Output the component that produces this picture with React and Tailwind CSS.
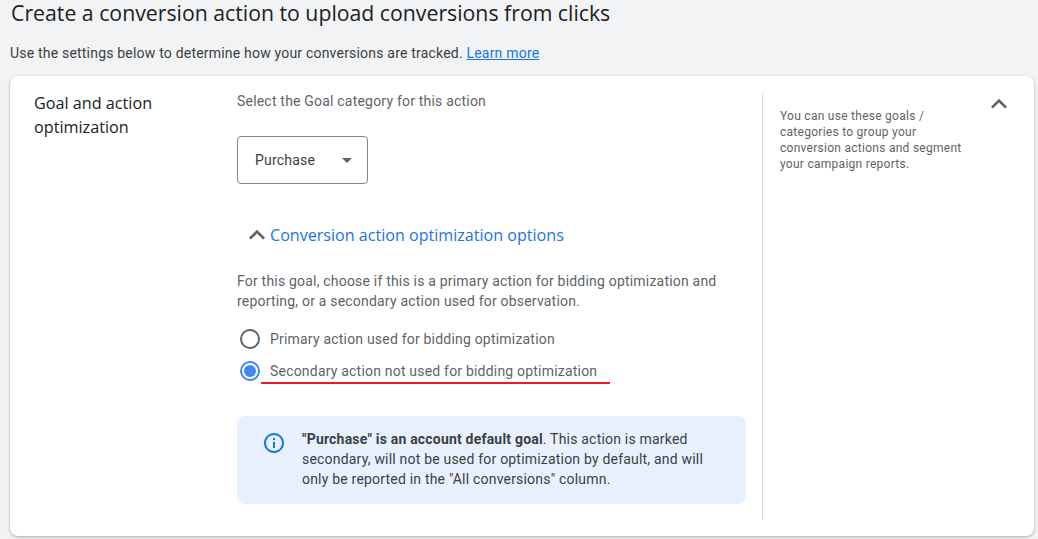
import React from 'react';

const CHEVRON_UP = 'M7.41 15.41L12 10.83l4.59 4.58L18 14l-6-6-6 6z';
const INFO_OUTLINE =
  'M11 7h2v2h-2zm0 4h2v6h-2zm1-9C6.48 2 2 6.48 2 12s4.48 10 10 10 10-4.48 10-10S17.52 2 12 2zm0 18c-4.41 0-8-3.59-8-8s3.59-8 8-8 8 3.59 8 8-3.59 8-8 8z';

const Icon = ({ d, size, className }) => (
  <svg width={size} height={size} viewBox="0 0 24 24" fill="currentColor" className={className}>
    <path d={d} />
  </svg>
);

const Radio = ({ checked }) => (
  <span
    className={`flex h-5 w-5 shrink-0 items-center justify-center rounded-full border-2 ${
      checked ? 'border-[#4285f4]' : 'border-[#5f6368]'
    }`}
  >
    {checked && <span className="h-3 w-3 rounded-full bg-[#4285f4]" />}
  </span>
);

export default function App() {
  return (
    <div className="h-[539px] w-[1038px] overflow-hidden bg-[#f1f3f4] font-['Roboto',sans-serif] tracking-[0.2px]">
      <h1 className="pl-[11px] font-['Open_Sans',sans-serif] text-[21.25px] leading-[26px] tracking-normal text-[#202124]">
        Create a conversion action to upload conversions from clicks
      </h1>
      <p className="mt-[17px] pl-[10px] text-sm leading-5 text-[#3c4043]">
        Use the settings below to determine how your conversions are tracked.{' '}
        <a className="text-[#1a73e8] underline">Learn more</a>
      </p>

      <div className="ml-[10px] mt-[13px] flex h-[460px] w-[1024px] rounded-lg bg-white shadow-[0_1px_3px_rgba(60,64,67,0.4)]">
        <div className="w-[227px] shrink-0 pl-[24px] pt-[15px] font-['Open_Sans',sans-serif] text-[16.2px] leading-6 tracking-normal text-[#202124]">
          Goal and action
          <br />
          optimization
        </div>

        <div className="w-[509px] shrink-0 pt-[15px]">
          <p className="text-sm leading-5 text-[#5f6368]">Select the Goal category for this action</p>

          <div className="mt-[25px] flex h-12 w-[131px] items-center justify-between rounded border border-[#80868b] pl-[17px] pr-[15px] text-sm text-[#3c4043]">
            <span>Purchase</span>
            <span className="h-0 w-0 border-x-[5px] border-t-[5px] border-x-transparent border-t-[#5f6368]" />
          </div>

          <div className="mt-[35px] flex h-8 items-center pl-[4px]">
            <Icon d={CHEVRON_UP} size={32} className="-mr-[3px] shrink-0 text-[#5f6368]" />
            <span className="font-['Open_Sans',sans-serif] text-[16.1px] leading-6 tracking-normal text-[#1a73e8]">
              Conversion action optimization options
            </span>
          </div>

          <p className="mt-[20px] text-sm leading-5 text-[#5f6368]">
            For this goal, choose if this is a primary action for bidding optimization and
            <br />
            reporting, or a secondary action used for observation.
          </p>

          <div className="mt-[18px] flex items-center gap-[10px] pl-[3px]">
            <Radio />
            <span className="text-sm leading-5 text-[#5f6368]">Primary action used for bidding optimization</span>
          </div>
          <div className="relative mt-[12px] flex items-center gap-[10px] pl-[3px]">
            <Radio checked />
            <span className="text-sm leading-5 text-[#5f6368]">Secondary action not used for bidding optimization</span>
            {/* red marker line drawn over the screenshot */}
            <span className="absolute left-[24px] top-[21px] h-[2px] w-[349px] bg-[#ed1c24]" />
          </div>

          <div className="mt-[35px] flex h-[88px] w-[509px] rounded-lg bg-[#e8f0fe] pl-[25px] pt-[13px]">
            <Icon d={INFO_OUTLINE} size={24} className="mt-[2px] shrink-0 text-[#1a73e8]" />
            <p className="ml-[16px] text-sm leading-5 text-[#3c4043]">
              <b className="font-bold">"Purchase" is an account default goal</b>. This action is marked
              <br />
              secondary, will not be used for optimization by default, and will
              <br />
              only be reported in the "All conversions" column.
            </p>
          </div>
        </div>

        <div className="ml-4 mt-[17px] h-[427px] w-px bg-[#dadce0]" />

        <div className="w-[190px] shrink-0 whitespace-nowrap pl-[17px] pt-[32px] text-xs leading-4 tracking-[0.27px] text-[#5f6368]">
          You can use these goals /
          <br />
          categories to group your
          <br />
          conversion actions and segment
          <br />
          your campaign reports.
        </div>

        <Icon d={CHEVRON_UP} size={32} className="ml-[30px] mt-[12px] shrink-0 text-[#5f6368]" />
      </div>
    </div>
  );
}
